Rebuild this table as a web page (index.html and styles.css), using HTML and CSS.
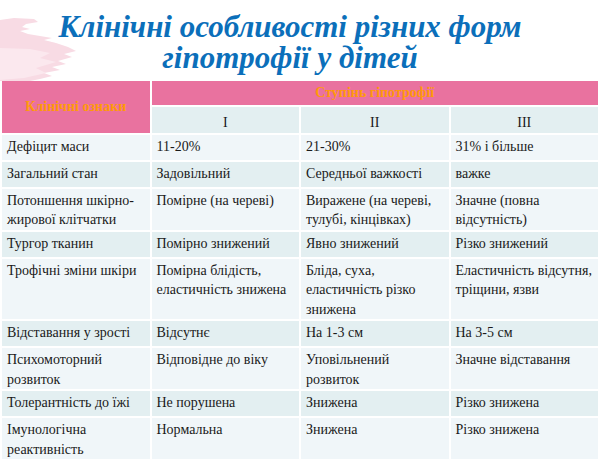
FILE: index.html
```html
<!DOCTYPE html>
<html lang="uk">
<head>
<meta charset="utf-8">
<link rel="stylesheet" href="styles.css">
</head>
<body>
<div class="slide">
  <svg class="brush" width="90" height="70" viewBox="0 0 90 70">
    <path d="M0 2 L14 0 L34 1 L38 4 L26 6 L22 9 L30 11 L20 13 L28 16 L40 18 L52 20 L44 22 L56 25 L68 29 L76 33 L64 36 L72 39 L58 43 L66 46 L52 49 L60 52 L44 55 L52 58 L40 61 L30 63 L0 63 Z" fill="#f8dbe4"/>
    <path d="M0 30 L30 31 L50 35 L40 40 L56 44 L36 50 L46 55 L24 60 L0 62 Z" fill="#fbe8ee"/>
  </svg>
  <h1 class="title">Клінічні особливості різних форм<br>гіпотрофії у дітей</h1>
  <table class="grid">
    <colgroup>
      <col class="c1"><col class="c2"><col class="c3"><col class="c4">
    </colgroup>
    <thead>
      <tr class="h1">
        <th rowspan="2" class="head-main">Клінічні ознаки</th>
        <th colspan="3" class="head-main">Ступінь гіпотрофії</th>
      </tr>
      <tr class="h2">
        <th class="deg">I</th><th class="deg">II</th><th class="deg">III</th>
      </tr>
    </thead>
    <tbody>
      <tr class="light"><td>Дефіцит маси</td><td>11-20%</td><td>21-30%</td><td>31% і більше</td></tr>
      <tr class="dark"><td>Загальний стан</td><td>Задовільний</td><td>Середньої важкості</td><td>важке</td></tr>
      <tr class="light"><td>Потоншення шкірно-жирової клітчатки</td><td>Помірне (на череві)</td><td>Виражене (на череві, тулубі, кінцівках)</td><td>Значне (повна відсутність)</td></tr>
      <tr class="dark"><td>Тургор тканин</td><td>Помірно знижений</td><td>Явно знижений</td><td>Різко знижений</td></tr>
      <tr class="light"><td>Трофічні зміни шкіри</td><td>Помірна блідість, еластичність знижена</td><td>Бліда, суха, еластичність різко знижена</td><td>Еластичність відсутня, тріщини, язви</td></tr>
      <tr class="dark"><td>Відставання у зрості</td><td>Відсутнє</td><td>На 1-3 см</td><td>На 3-5 см</td></tr>
      <tr class="light"><td>Психомоторний розвиток</td><td>Відповідне до віку</td><td>Уповільнений розвиток</td><td>Значне відставання</td></tr>
      <tr class="dark"><td>Толерантність до їжі</td><td>Не порушена</td><td>Знижена</td><td>Різко знижена</td></tr>
      <tr class="light"><td>Імунологічна реактивність</td><td>Нормальна</td><td>Знижена</td><td>Різко знижена</td></tr>
    </tbody>
  </table>
</div>
</body>
</html>
```

FILE: styles.css
```css
html, body {
  margin: 0;
  padding: 0;
  background: #ffffff;
}

.slide {
  position: relative;
  width: 600px;
  height: 463px;
  overflow: hidden;
  background: #ffffff;
}

.brush {
  position: absolute;
  left: 0;
  top: 18px;
}

.title {
  position: relative;
  margin: 0;
  height: 79px;
  padding: 11px 20px 0 0;
  box-sizing: border-box;
  text-align: center;
  font-family: "Liberation Serif", serif;
  font-style: italic;
  font-weight: bold;
  font-size: 31px;
  line-height: 31px;
  color: #0b6fba;
}

.grid {
  border-collapse: collapse;
  table-layout: fixed;
  width: 598px;
  font-family: "Liberation Serif", serif;
  font-size: 14px;
  line-height: 19.5px;
  color: #1a1a1a;
}

.c1, .c2, .c3, .c4 { width: 149.5px; }

.grid th, .grid td {
  border: 2px solid #ffffff;
  vertical-align: top;
  padding: 2px 5px 0 5px;
  text-align: left;
  font-weight: normal;
}

.grid tbody tr { height: 27px; }

.h1 { height: 26px; }
.h2 { height: 27px; }

.head-main {
  background: #e9729f;
  color: #ff9a0a;
  font-weight: bold !important;
  text-align: center !important;
  vertical-align: middle !important;
  padding: 0 !important;
}

.deg {
  background: #e3eff1;
  text-align: center !important;
  vertical-align: middle !important;
  padding: 6px 0 0 0 !important;
}

.light td { background: #f0f6f9; }
.dark td { background: #e3eff1; }
```
